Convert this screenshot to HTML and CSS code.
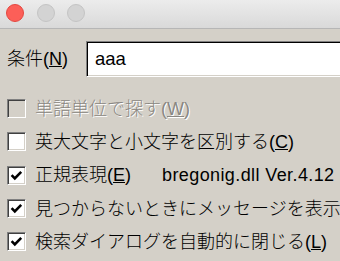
FILE: index.html
```html
<!DOCTYPE html>
<html lang="ja">
<head>
<meta charset="utf-8">
<link rel="stylesheet" href="styles.css">
</head>
<body>
<div class="window">
  <div class="titlebar">
    <span class="light red"></span>
    <span class="light"></span>
    <span class="light"></span>
  </div>
  <div class="content">
    <div class="field-row">
      <span class="field-label">条件<span class="key">(<u>N</u>)</span></span>
      <div class="field">aaa</div>
    </div>
    <div class="row disabled">
      <span class="box"></span>
      <span class="label">単語単位で探す<span class="key">(<u>W</u>)</span></span>
    </div>
    <div class="row">
      <span class="box"></span>
      <span class="label">英大文字と小文字を区別する<span class="key">(<u>C</u>)</span></span>
    </div>
    <div class="row">
      <span class="box"><svg class="check" viewBox="0 0 15 15"><path d="M2.6 7.2 L5.8 10.4 L12.2 3.8"/></svg></span>
      <span class="label wide">正規表現<span class="key">(<u>E</u>)</span></span>
      <span class="info">bregonig.dll Ver.4.12 で動作</span>
    </div>
    <div class="row">
      <span class="box"><svg class="check" viewBox="0 0 15 15"><path d="M2.6 7.2 L5.8 10.4 L12.2 3.8"/></svg></span>
      <span class="label">見つからないときにメッセージを表示する<span class="key">(<u>M</u>)</span></span>
    </div>
    <div class="row">
      <span class="box"><svg class="check" viewBox="0 0 15 15"><path d="M2.6 7.2 L5.8 10.4 L12.2 3.8"/></svg></span>
      <span class="label">検索ダイアログを自動的に閉じる<span class="key">(<u>L</u>)</span></span>
    </div>
  </div>
</div>
</body>
</html>
```

FILE: styles.css
```css
html, body {
  margin: 0;
  padding: 0;
  width: 340px;
  height: 261px;
  overflow: hidden;
  background: #d4d0c8;
}

.window {
  width: 340px;
  height: 261px;
  overflow: hidden;
  font-family: "Liberation Sans", "Noto Sans CJK JP", sans-serif;
  font-size: 18px;
  color: #000;
}

.titlebar {
  border-bottom: 1px solid #b6b6b6;
  background: linear-gradient(#ececec, #d9d9d9);
  display: flex;
  align-items: flex-start;
  gap: 12.5px;
  padding: 4px 0 0 6px;
  box-sizing: content-box;
  height: 24px;
}

.light {
  width: 18px;
  height: 18px;
  border-radius: 50%;
  box-sizing: border-box;
  background: #d3d3d3;
  border: 1px solid #c4c4c4;
}

.light.red {
  background: #fc5f58;
  border-color: #e4473f;
}

.content {
  padding: 12px 0 0 7px;
}

.field-row {
  display: flex;
  align-items: center;
  height: 36px;
  white-space: nowrap;
}

.field-label {
  width: 79px;
  flex: none;
  line-height: 20px;
  font-weight: 300;
}

.key {
  font-weight: 400;
  font-family: "Liberation Sans", sans-serif;
}

.field {
  flex: 1;
  margin-right: -30px;
  height: 36px;
  box-sizing: border-box;
  background: #fff;
  border-style: solid;
  border-width: 1px;
  border-color: #808080 #fff #fff #808080;
  box-shadow: inset 1px 1px 0 #000, inset -1px -1px 0 #d4d0c8;
  padding-left: 8px;
  line-height: 33px;
  font-size: 18.5px;
}

.field-row + .row {
  margin-top: 15px;
}

.row {
  display: flex;
  align-items: center;
  height: 33.33px;
  white-space: nowrap;
}

.box {
  width: 19px;
  height: 19px;
  flex: none;
  box-sizing: border-box;
  background: #fff;
  border-style: solid;
  border-width: 1px;
  border-color: #808080 #fff #fff #808080;
  box-shadow: inset 1px 1px 0 #404040, inset -1px -1px 0 #d4d0c8;
  display: flex;
  align-items: center;
  justify-content: center;
}

.check {
  width: 15px;
  height: 15px;
  fill: none;
  stroke: #000;
  stroke-width: 2.6;
  stroke-linecap: butt;
  stroke-linejoin: miter;
}

.label {
  margin-left: 9px;
  line-height: 20px;
  font-weight: 300;
}

.label.wide {
  width: 127px;
  flex: none;
}

.info {
  line-height: 20px;
  letter-spacing: 0.4px;
}

.disabled .box {
  background: #d4d0c8;
}

.disabled .label {
  color: #8a8782;
  text-shadow: 1px 1px 0 #fff;
}
```
